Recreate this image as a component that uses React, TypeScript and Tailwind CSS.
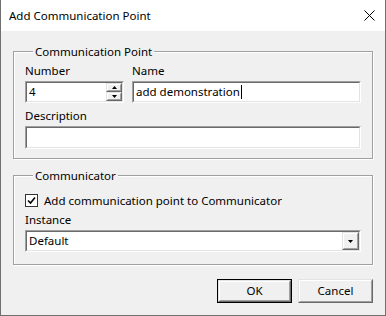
import React from "react";

function Sunken({ className = "", children }: { className?: string; children?: React.ReactNode }) {
  return (
    <div className={`border border-t-[#a0a0a0] border-l-[#a0a0a0] border-b-white border-r-white ${className}`}>
      <div className="flex h-full border border-t-[#696969] border-l-[#696969] border-b-[#e3e3e3] border-r-[#e3e3e3] bg-white">
        {children}
      </div>
    </div>
  );
}

function Raised({ className = "", children }: { className?: string; children?: React.ReactNode }) {
  return (
    <div className={`border border-t-[#e3e3e3] border-l-[#e3e3e3] border-b-[#696969] border-r-[#696969] bg-[#f0f0f0] ${className}`}>
      <div className="flex h-full items-center justify-center border border-t-white border-l-white border-b-[#a0a0a0] border-r-[#a0a0a0]">
        {children}
      </div>
    </div>
  );
}

function Arrow({ up = false }: { up?: boolean }) {
  return (
    <svg width="5" height="3" viewBox="0 0 5 3" className={up ? "rotate-180" : ""}>
      <path d="M0 0h5L2.5 3z" fill="#000" />
    </svg>
  );
}

function Group({ title, className = "", children }: { title: string; className?: string; children: React.ReactNode }) {
  return (
    <fieldset
      className={`mx-[12px] w-[360px] border border-[#a0a0a0] px-[11px] shadow-[1px_1px_0_#fff,inset_1px_1px_0_#fff] ${className}`}
    >
      <legend className="ml-[8px] bg-[#f0f0f0] px-[2px] leading-[15px]">{title}</legend>
      {children}
    </fieldset>
  );
}

export default function App() {
  return (
    <div className="flex h-[316px] w-[386px] flex-col border-x border-b border-[#707070] bg-[#f0f0f0] font-['Noto_Sans',sans-serif] text-[11.5px] text-black">
      {/* Title bar */}
      <div className="flex h-[31px] shrink-0 items-center justify-between bg-white pl-[8px] pr-[10px]">
        <span className="text-[11.5px]">Add Communication Point</span>
        <svg width="11" height="11" viewBox="0 0 11 11" stroke="#000" strokeWidth="1" fill="none">
          <path d="M0.5 0.5l10 10M10.5 0.5l-10 10" />
        </svg>
      </div>

      <Group title="Communication Point" className="mt-[13px] h-[115px]">
        <div className="mt-[5px] grid grid-cols-[99px_1fr] gap-x-[8px]">
          <label className="leading-[14px]">Number</label>
          <label className="leading-[14px]">Name</label>
          <Sunken className="mt-[3px] h-[22px]">
            <span className="flex-1 pl-[2px] leading-[18px]">4</span>
            <div className="flex w-[16px] flex-col">
              <Raised className="h-[10px]">
                <Arrow up />
              </Raised>
              <Raised className="h-[10px]">
                <Arrow />
              </Raised>
            </div>
          </Sunken>
          <Sunken className="mt-[3px] h-[22px]">
            <span className="flex items-center pl-[2px] leading-[18px]">
              add demonstration
              <span className="ml-px inline-block h-[14px] w-px bg-black" />
            </span>
          </Sunken>
        </div>
        <label className="mt-[6px] block leading-[14px]">Description</label>
        <Sunken className="mt-[3px] h-[23px]" />
      </Group>

      <Group title="Communicator" className="mt-[9px] h-[97px]">
        <div className="mt-[10px] flex items-center gap-[6px] leading-[15px]">
          <div className="flex h-[13px] w-[13px] items-center justify-center border border-[#333] bg-white">
            <svg width="9" height="9" viewBox="0 0 9 9">
              <path d="M1 4.5l2.5 2.5L8 1.5" stroke="#000" strokeWidth="1.6" fill="none" />
            </svg>
          </div>
          <span>Add communication point to Communicator</span>
        </div>
        <label className="mt-[5px] block leading-[14px]">Instance</label>
        <Sunken className="mt-[3px] h-[22px]">
          <span className="flex-1 pl-[2px] leading-[18px]">Default</span>
          <Raised className="w-[17px]">
            <Arrow />
          </Raised>
        </Sunken>
      </Group>

      <div className="mr-[12px] mt-[14px] flex justify-end gap-[6px]">
        <div className="border border-black">
          <Raised className="h-[22px] w-[73px]">OK</Raised>
        </div>
        <Raised className="h-[24px] w-[75px]">Cancel</Raised>
      </div>
    </div>
  );
}
